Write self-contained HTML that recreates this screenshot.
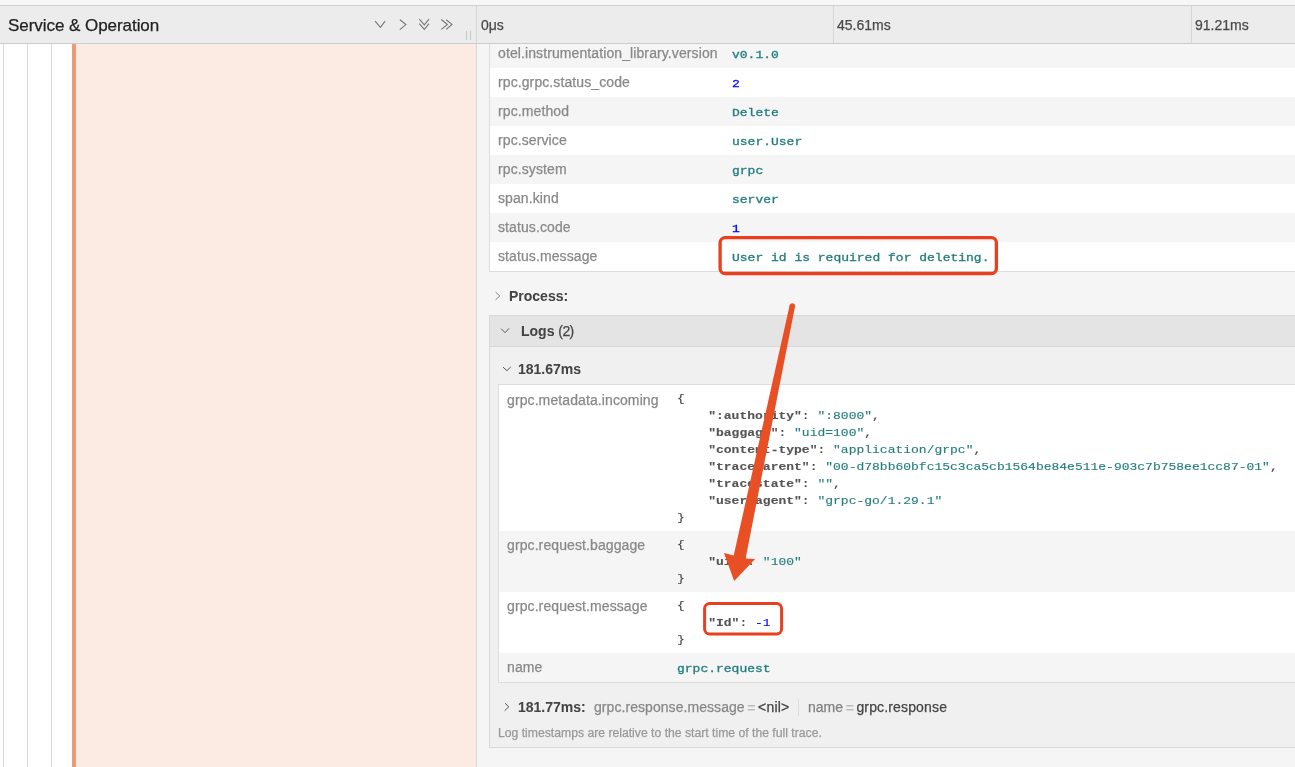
<!DOCTYPE html>
<html><head><meta charset="utf-8">
<style>
html,body{margin:0;padding:0;width:1295px;height:767px;overflow:hidden;background:#f5f5f5;}
body{position:relative;font-family:"Liberation Sans",sans-serif;}
.a{position:absolute;}
.t{position:absolute;white-space:pre;font-size:14px;line-height:16px;will-change:transform;-webkit-text-stroke:0.25px currentColor;}
.m{position:absolute;white-space:pre;font-family:"Liberation Mono",monospace;font-size:13px;line-height:17px;color:#444;will-change:transform;-webkit-text-stroke:0.15px currentColor;}
.mv{-webkit-text-stroke:0.35px currentColor;}
.k{-webkit-text-stroke:0.15px currentColor;}
.ml{height:17px;transform:scaleY(0.84);transform-origin:0 12px;}
.k{font-weight:bold;color:#555;}
.s{color:#237d7d;}
.n{color:blue;}
.key{color:#888;letter-spacing:0.1px;}
.b{font-weight:bold;color:#444;-webkit-text-stroke:0.05px currentColor;}
b{-webkit-text-stroke:0.05px currentColor;}
</style></head><body>
<!-- top strip -->
<div class="a" style="left:0;top:0;width:1295px;height:5px;background:#f7f7f7;"></div>
<div class="a" style="left:0;top:5px;width:1295px;height:1px;background:#cfcfcf;"></div>
<!-- header -->
<div class="a" style="left:0;top:6px;width:1295px;height:37px;background:#ececec;"></div>
<div class="a" style="left:0;top:43px;width:1295px;height:1px;background:#cccccc;"></div>
<div class="t" style="left:8px;top:16px;font-size:17px;line-height:20px;color:#222;letter-spacing:-0.05px;">Service &amp; Operation</div>

<!-- left body -->
<div class="a" style="left:0;top:44px;width:72px;height:723px;background:#fff;"></div>
<div class="a" style="left:3px;top:44px;width:1px;height:723px;background:#d8d8d8;"></div>
<div class="a" style="left:27px;top:44px;width:1px;height:723px;background:#d8d8d8;"></div>
<div class="a" style="left:51px;top:44px;width:1px;height:723px;background:#d8d8d8;"></div>
<div class="a" style="left:72px;top:44px;width:4px;height:723px;background:#ed9a77;"></div>
<div class="a" style="left:76px;top:44px;width:400px;height:723px;background:#fbebe3;"></div>
<!-- divider -->
<div class="a" style="left:476px;top:6px;width:1px;height:761px;background:#d6d6d6;"></div>

<!-- header icons -->
<svg class="a" style="left:360px;top:6px;" width="116" height="37" viewBox="0 0 116 37" fill="none" stroke="#777" stroke-width="1.1">
  <path d="M15.1 15.1 L20.4 21.3 L25.1 15.1"/>
  <path d="M39.9 13.8 L45.9 18.6 L39.8 23.6"/>
  <path d="M59.3 13.2 L64.3 18.8 L69 13.2 M59.3 17.6 L64.3 23.4 L69 17.6"/>
  <path d="M81.3 13.5 L87.4 18.5 L81.3 23.4 M86.2 13.8 L92 18.4 L86.2 23.4"/>
  <path d="M106.5 25 V34 M110.5 25 V34" stroke="#c8c8c8"/>
</svg>

<!-- timeline labels -->
<div class="t" style="left:481px;top:17px;color:#4a4a4a;">0μs</div>
<div class="a" style="left:833px;top:6px;width:1px;height:37px;background:#d6d6d6;"></div>
<div class="t" style="left:837px;top:17px;color:#4a4a4a;">45.61ms</div>
<div class="a" style="left:1191px;top:6px;width:1px;height:37px;background:#d6d6d6;"></div>
<div class="t" style="left:1195px;top:17px;color:#4a4a4a;">91.21ms</div>

<!-- tag table -->
<div class="a" style="left:489px;top:44px;width:806px;height:227px;border-left:1px solid #ddd;border-bottom:1px solid #ddd;background:#fff;"></div>
<div class="a" style="left:490px;top:44px;width:805px;height:24px;background:#f5f5f5;"></div>
<div class="t key" style="left:498px;top:45px;">otel.instrumentation_library.version</div>
<div class="m mv" style="left:732px;top:46px;"><div class="ml"><span class="s">v0.1.0</span></div></div>
<div class="a" style="left:490px;top:68px;width:805px;height:29px;background:#fff;"></div>
<div class="t key" style="left:498px;top:74px;">rpc.grpc.status_code</div>
<div class="m mv" style="left:732px;top:75px;"><div class="ml"><span class="n">2</span></div></div>
<div class="a" style="left:490px;top:97px;width:805px;height:29px;background:#f5f5f5;"></div>
<div class="t key" style="left:498px;top:103px;">rpc.method</div>
<div class="m mv" style="left:732px;top:104px;"><div class="ml"><span class="s">Delete</span></div></div>
<div class="a" style="left:490px;top:126px;width:805px;height:29px;background:#fff;"></div>
<div class="t key" style="left:498px;top:132px;">rpc.service</div>
<div class="m mv" style="left:732px;top:133px;"><div class="ml"><span class="s">user.User</span></div></div>
<div class="a" style="left:490px;top:155px;width:805px;height:29px;background:#f5f5f5;"></div>
<div class="t key" style="left:498px;top:161px;">rpc.system</div>
<div class="m mv" style="left:732px;top:162px;"><div class="ml"><span class="s">grpc</span></div></div>
<div class="a" style="left:490px;top:184px;width:805px;height:29px;background:#fff;"></div>
<div class="t key" style="left:498px;top:190px;">span.kind</div>
<div class="m mv" style="left:732px;top:191px;"><div class="ml"><span class="s">server</span></div></div>
<div class="a" style="left:490px;top:213px;width:805px;height:29px;background:#f5f5f5;"></div>
<div class="t key" style="left:498px;top:219px;">status.code</div>
<div class="m mv" style="left:732px;top:220px;"><div class="ml"><span class="n">1</span></div></div>
<div class="a" style="left:490px;top:242px;width:805px;height:29px;background:#fff;"></div>
<div class="t key" style="left:498px;top:248px;">status.message</div>
<div class="m mv" style="left:732px;top:249px;"><div class="ml"><span class="s">User id is required for deleting.</span></div></div>
<!-- process -->
<svg class="a" style="left:490px;top:286px;" width="16" height="20" fill="none" stroke="#8a8a8a" stroke-width="1"><path d="M5.6 6.2 L9.9 10 L5.5 13.8"/></svg>
<div class="t b" style="left:509px;top:288px;">Process:</div>
<!-- logs -->
<div class="a" style="left:489px;top:315px;width:806px;height:431px;border:1px solid #d8d8d8;border-right:none;background:#f0f0f0;"></div>
<div class="a" style="left:490px;top:316px;width:805px;height:30px;background:#e4e4e4;border-bottom:1px solid #d8d8d8;"></div>
<svg class="a" style="left:496px;top:322px;" width="20" height="20" fill="none" stroke="#555" stroke-width="1"><path d="M5.2 6.7 L9.1 10.7 L13 6.4"/></svg>
<div class="t" style="left:521px;top:323px;color:#444;"><b>Logs</b> <span style="letter-spacing:-0.6px">(2)</span></div>
<svg class="a" style="left:498px;top:360px;" width="20" height="20" fill="none" stroke="#555" stroke-width="1"><path d="M5 7.1 L8.9 10.7 L12.8 6.9"/></svg>
<div class="t b" style="left:518px;top:361px;">181.67ms</div>
<div class="a" style="left:498px;top:384px;width:797px;height:297px;border:1px solid #ddd;border-right:none;background:#fff;"></div>
<div class="a" style="left:499px;top:385px;width:796px;height:146px;background:#fff;"></div>
<div class="t key" style="left:507px;top:392px;">grpc.metadata.incoming</div>
<div class="m" style="left:677px;top:390px;"><div class="ml">{</div><div class="ml">    <span class="k">":authority"</span>: <span class="s">":8000"</span>,</div><div class="ml">    <span class="k">"baggage"</span>: <span class="s">"uid=100"</span>,</div><div class="ml">    <span class="k">"content-type"</span>: <span class="s">"application/grpc"</span>,</div><div class="ml">    <span class="k">"traceparent"</span>: <span class="s">"00-d78bb60bfc15c3ca5cb1564be84e511e-903c7b758ee1cc87-01"</span>,</div><div class="ml">    <span class="k">"tracestate"</span>: <span class="s">""</span>,</div><div class="ml">    <span class="k">"user-agent"</span>: <span class="s">"grpc-go/1.29.1"</span></div><div class="ml">}</div></div>
<div class="a" style="left:499px;top:531px;width:796px;height:61px;background:#f5f5f5;"></div>
<div class="t key" style="left:507px;top:537px;">grpc.request.baggage</div>
<div class="m" style="left:677px;top:536px;"><div class="ml">{</div><div class="ml">    <span class="k">"uid"</span>: <span class="s">"100"</span></div><div class="ml">}</div></div>
<div class="a" style="left:499px;top:592px;width:796px;height:61px;background:#fff;"></div>
<div class="t key" style="left:507px;top:598px;">grpc.request.message</div>
<div class="m" style="left:677px;top:597px;"><div class="ml">{</div><div class="ml">    <span class="k">"Id"</span>: <span class="n">-1</span></div><div class="ml">}</div></div>
<div class="a" style="left:499px;top:653px;width:796px;height:29px;background:#f5f5f5;"></div>
<div class="t key" style="left:507px;top:659px;">name</div>
<div class="m mv" style="left:677px;top:660px;"><div class="ml"><span class="s">grpc.request</span></div></div>
<svg class="a" style="left:498px;top:697px;" width="16" height="20" fill="none" stroke="#555" stroke-width="1"><path d="M7 6.2 L10.8 9.8 L6.7 13.7"/></svg>
<div class="t b" style="left:518px;top:699px;">181.77ms:</div>
<div class="t" style="left:594px;top:699px;"><span style="color:#888;letter-spacing:0.06px">grpc.response.message</span><span style="color:#bbb;padding:0 2.6px;position:relative;top:1px">=</span><span style="color:#444;letter-spacing:0.2px">&lt;nil&gt;</span></div>
<div class="a" style="left:798px;top:699px;width:1px;height:17px;background:#ddd;"></div>
<div class="t" style="left:808px;top:699px;"><span style="color:#808080">name</span><span style="color:#bbb;padding:0 2.6px;position:relative;top:1px">=</span><span style="color:#444;letter-spacing:0.15px">grpc.response</span></div>
<div class="t" style="left:498px;top:726px;font-size:12.2px;line-height:14px;color:#999;">Log timestamps are relative to the start time of the full trace.</div>
<!-- annotations -->
<svg class="a" style="left:0;top:0;" width="1295" height="767" viewBox="0 0 1295 767"><rect x="720.1" y="237.6" width="276.3" height="35.9" rx="5" fill="none" stroke="#e8401e" stroke-width="3.3"/><rect x="704.6" y="603.5" width="77" height="30.5" rx="5" fill="none" stroke="#e8401e" stroke-width="3"/><polygon points="789.6,305.4 795.0,306.6 745.6,558.6 755.1,559.1 734.2,581 724.0,552.9 733.7,555.5" fill="#e94f24"/><circle cx="792.3" cy="306" r="2.75" fill="#e94f24"/></svg>
</body></html>
